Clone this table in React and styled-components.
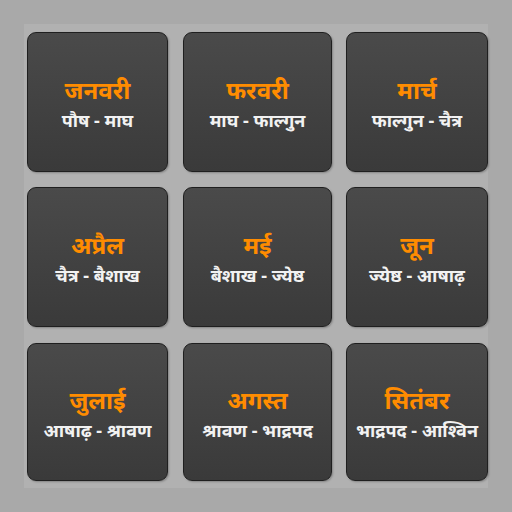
import React from "react";
import styled, { createGlobalStyle } from "styled-components";

const Global = createGlobalStyle`
  html, body { margin: 0; padding: 0; background: #a9a9a9; }
  body { font-family: "Noto Sans", "Lohit Devanagari", sans-serif; }
`;

const Page = styled.div`
  width: 512px;
  height: 512px;
  padding: 24px;
  box-sizing: border-box;
  background: #a9a9a9;
`;

const Board = styled.div`
  width: 464px;
  height: 464px;
  box-sizing: border-box;
  background: #b1b1b1;
  padding: 8px 1px 6px 3px;
  display: grid;
  grid-template-columns: 141px 149px 141px;
  grid-template-rows: 140px 140px 139px;
  column-gap: 15px;
  row-gap: 15px;
  & > :nth-child(3n) { margin-left: -1px; }
  & > :nth-child(n + 7) { margin-top: 1px; }
`;

const Card = styled.div`
  box-sizing: border-box;
  border: 1px solid #1f1f1f;
  border-radius: 9px;
  background: linear-gradient(#4a4a4a, #3a3a3a);
  box-shadow: 1px 1px 2px rgba(0, 0, 0, 0.25);
  display: flex;
  flex-direction: column;
  align-items: center;
  justify-content: center;
  gap: 3px;
  padding-top: 2px;
`;

const Title = styled.div`
  color: #ff8c00;
  font-weight: 700;
  font-size: 24px;
  line-height: 30px;
  white-space: nowrap;
`;

const Sub = styled.div`
  color: #f2f2f2;
  font-weight: 700;
  font-size: 18px;
  line-height: 24px;
  white-space: nowrap;
`;

const months = [
  ["जनवरी", "पौष - माघ"],
  ["फरवरी", "माघ - फाल्गुन"],
  ["मार्च", "फाल्गुन - चैत्र"],
  ["अप्रैल", "चैत्र - बैशाख"],
  ["मई", "बैशाख - ज्येष्ठ"],
  ["जून", "ज्येष्ठ - आषाढ़"],
  ["जुलाई", "आषाढ़ - श्रावण"],
  ["अगस्त", "श्रावण - भाद्रपद"],
  ["सितंबर", "भाद्रपद - आश्विन"],
];

export default function App() {
  return (
    <>
      <Global />
      <Page>
        <Board>
          {months.map(([t, s]) => (
            <Card key={t}>
              <Title>{t}</Title>
              <Sub>{s}</Sub>
            </Card>
          ))}
        </Board>
      </Page>
    </>
  );
}
